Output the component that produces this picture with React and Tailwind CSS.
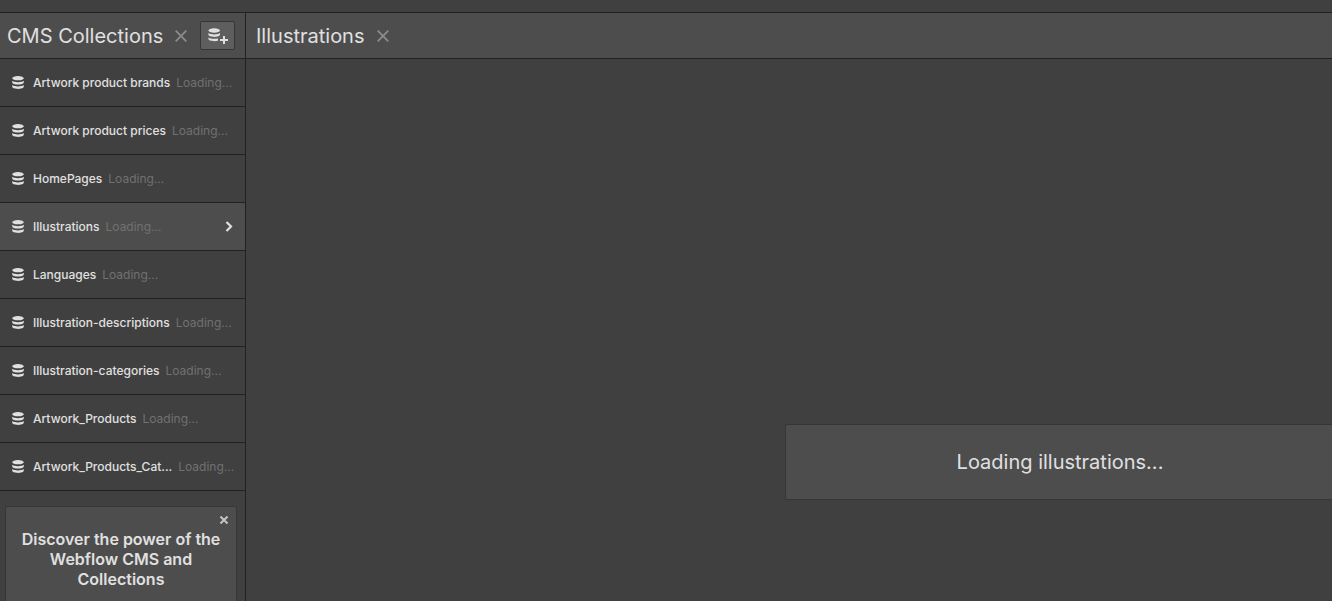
import clsx from 'clsx';

const collections = [
  'Artwork product brands',
  'Artwork product prices',
  'HomePages',
  'Illustrations',
  'Languages',
  'Illustration-descriptions',
  'Illustration-categories',
  'Artwork_Products',
  'Artwork_Products_Cat...',
];

function StackIcon() {
  return (
    <svg width="12" height="13" viewBox="0 0 12 13" fill="currentColor" className="shrink-0">
      <ellipse cx="6" cy="2.2" rx="5.8" ry="2.1" />
      <path d="M.2 4.800C1.500 5.800 3.700 6.200 6 6.200s4.500-.4 5.800-1.400v1.400C11.800 7.900 9 8.600 6 8.600S.2 7.900.2 6.200z" />
      <path d="M.2 9.100C1.500 10.100 3.700 10.500 6 10.500s4.500-.4 5.800-1.400v1.400c0 1.700-2.800 2.400-5.800 2.400S.2 12.200.2 10.500z" />
    </svg>
  );
}

function StackPlusIcon() {
  return (
    <svg width="20" height="19" viewBox="0 0 20 19" fill="currentColor">
      <ellipse cx="6.200" cy="4.500" rx="5.800" ry="2.200" />
      <path d="M.4 7.100C1.700 8.100 3.900 8.500 6.200 8.500s4.500-.4 5.800-1.400v1.400c0 1.700-2.800 2.400-5.800 2.400S.4 10.200.4 8.500z" />
      <path d="M.4 11.400C1.700 12.400 3.900 12.800 6.200 12.800c1.400 0 2.700-.1 3.800-.4v2.400c-1.100.3-2.400.4-3.800.4-3 0-5.800-.7-5.800-2.400z" />
      <path d="M15 10h2v3h3v2h-3v3h-2v-3h-3v-2h3z" />
    </svg>
  );
}

function CloseIcon({ size = 12, stroke = 1.9 }) {
  return (
    <svg width={size} height={size} viewBox="0 0 12 12" fill="none" stroke="currentColor" strokeWidth={stroke}>
      <path d="M.7.7l10.600 10.600M11.300.7L.7 11.300" />
    </svg>
  );
}

function PanelTitle({ children }) {
  return (
    <>
      <h2 className="text-xl leading-6 whitespace-nowrap">{children}</h2>
      <button type="button" aria-label="Close" className="ml-3 text-[#8a8a8a]">
        <CloseIcon />
      </button>
    </>
  );
}

function CollectionRow({ name, active }) {
  return (
    <li className="border-b border-[#212121]">
      <a
        href="#"
        className={clsx('flex items-center h-[47px] px-3 text-xs whitespace-nowrap', active && 'bg-[#4d4d4d]')}
      >
        <StackIcon />
        <span className="ml-[9px] font-medium">{name}</span>
        <span className="ml-1.5 text-[#717171]">Loading...</span>
        {active && (
          <svg width="8" height="11" viewBox="0 0 8 11" fill="none" stroke="currentColor" strokeWidth="2.200" className="ml-auto">
            <path d="M1.500 1L6 5.500 1.500 10" />
          </svg>
        )}
      </a>
    </li>
  );
}

function Sidebar() {
  return (
    <aside className="w-[246px] shrink-0 border-r border-[#212121]">
      <header className="flex items-center h-[46px] pl-[7px] pr-[10px] bg-[#4d4d4d] border-b border-[#212121]">
        <PanelTitle>CMS Collections</PanelTitle>
        <button
          type="button"
          aria-label="Add collection"
          className="ml-auto w-[35px] h-[29px] flex items-center justify-center rounded-xs border border-[#363636] bg-[#5e5e5e]"
        >
          <StackPlusIcon />
        </button>
      </header>
      <ul>
        {collections.map(name => (
          <CollectionRow key={name} name={name} active={name === 'Illustrations'} />
        ))}
      </ul>
      <section className="relative mt-[15px] ml-[5px] mr-2 px-3 pt-[22px] pb-8 rounded-xs border border-[#363636] bg-[#4d4d4d]">
        <button type="button" aria-label="Dismiss" className="absolute top-[9px] right-2 text-[#c4c4c4]">
          <CloseIcon size={8} stroke={3} />
        </button>
        <h3 className="text-base leading-5 font-semibold text-center">
          Discover the power of the Webflow CMS and Collections
        </h3>
      </section>
    </aside>
  );
}

export default function App() {
  return (
    <div className="h-screen overflow-hidden flex flex-col bg-[#404040] text-[#e0e0e0] font-['Inter',sans-serif]">
      <div className="h-[13px] shrink-0 border-b border-[#212121]" />
      <div className="flex flex-1 min-h-0">
        <Sidebar />
        <main className="flex-1 min-w-0 overflow-hidden">
          <header className="flex items-center h-[46px] pl-[10px] bg-[#4d4d4d] border-b border-[#212121]">
            <PanelTitle>Illustrations</PanelTitle>
          </header>
          <div className="flex justify-end pt-[365px]">
            <div
              role="status"
              className="w-[550px] -mr-[3px] shrink-0 py-[25px] text-center text-xl leading-6 rounded-xs border border-[#363636] bg-[#4d4d4d]"
            >
              Loading illustrations...
            </div>
          </div>
        </main>
      </div>
    </div>
  );
}
